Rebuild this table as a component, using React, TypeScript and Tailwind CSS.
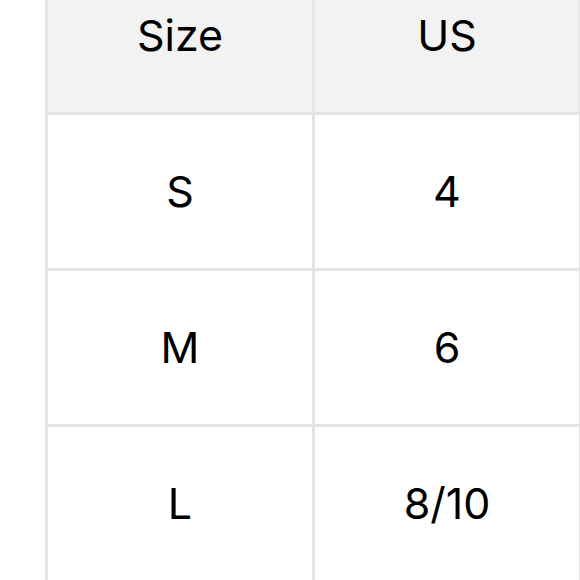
const ROWS = [
  ['Size', 'US'],
  ['S', '4'],
  ['M', '6'],
  ['L', '8/10'],
]

export default function App() {
  return (
    <div className="w-[580px] h-[580px] overflow-hidden bg-white font-['Inter','Liberation_Sans',Arial,sans-serif] text-black">
      <div className="ml-[45px] mt-[-44px] grid w-max grid-cols-[264px_264px] gap-[3px] bg-[#e4e4e4] p-[3px]">
        {ROWS.map((row, i) =>
          row.map((cell, j) => (
            <div
              key={`${i}-${j}`}
              className={`h-[153px] flex items-center justify-center text-[43px] leading-none ${
                i === 0 ? 'bg-[#f2f2f2]' : 'bg-white'
              }`}
            >
              {cell}
            </div>
          ))
        )}
      </div>
    </div>
  )
}
